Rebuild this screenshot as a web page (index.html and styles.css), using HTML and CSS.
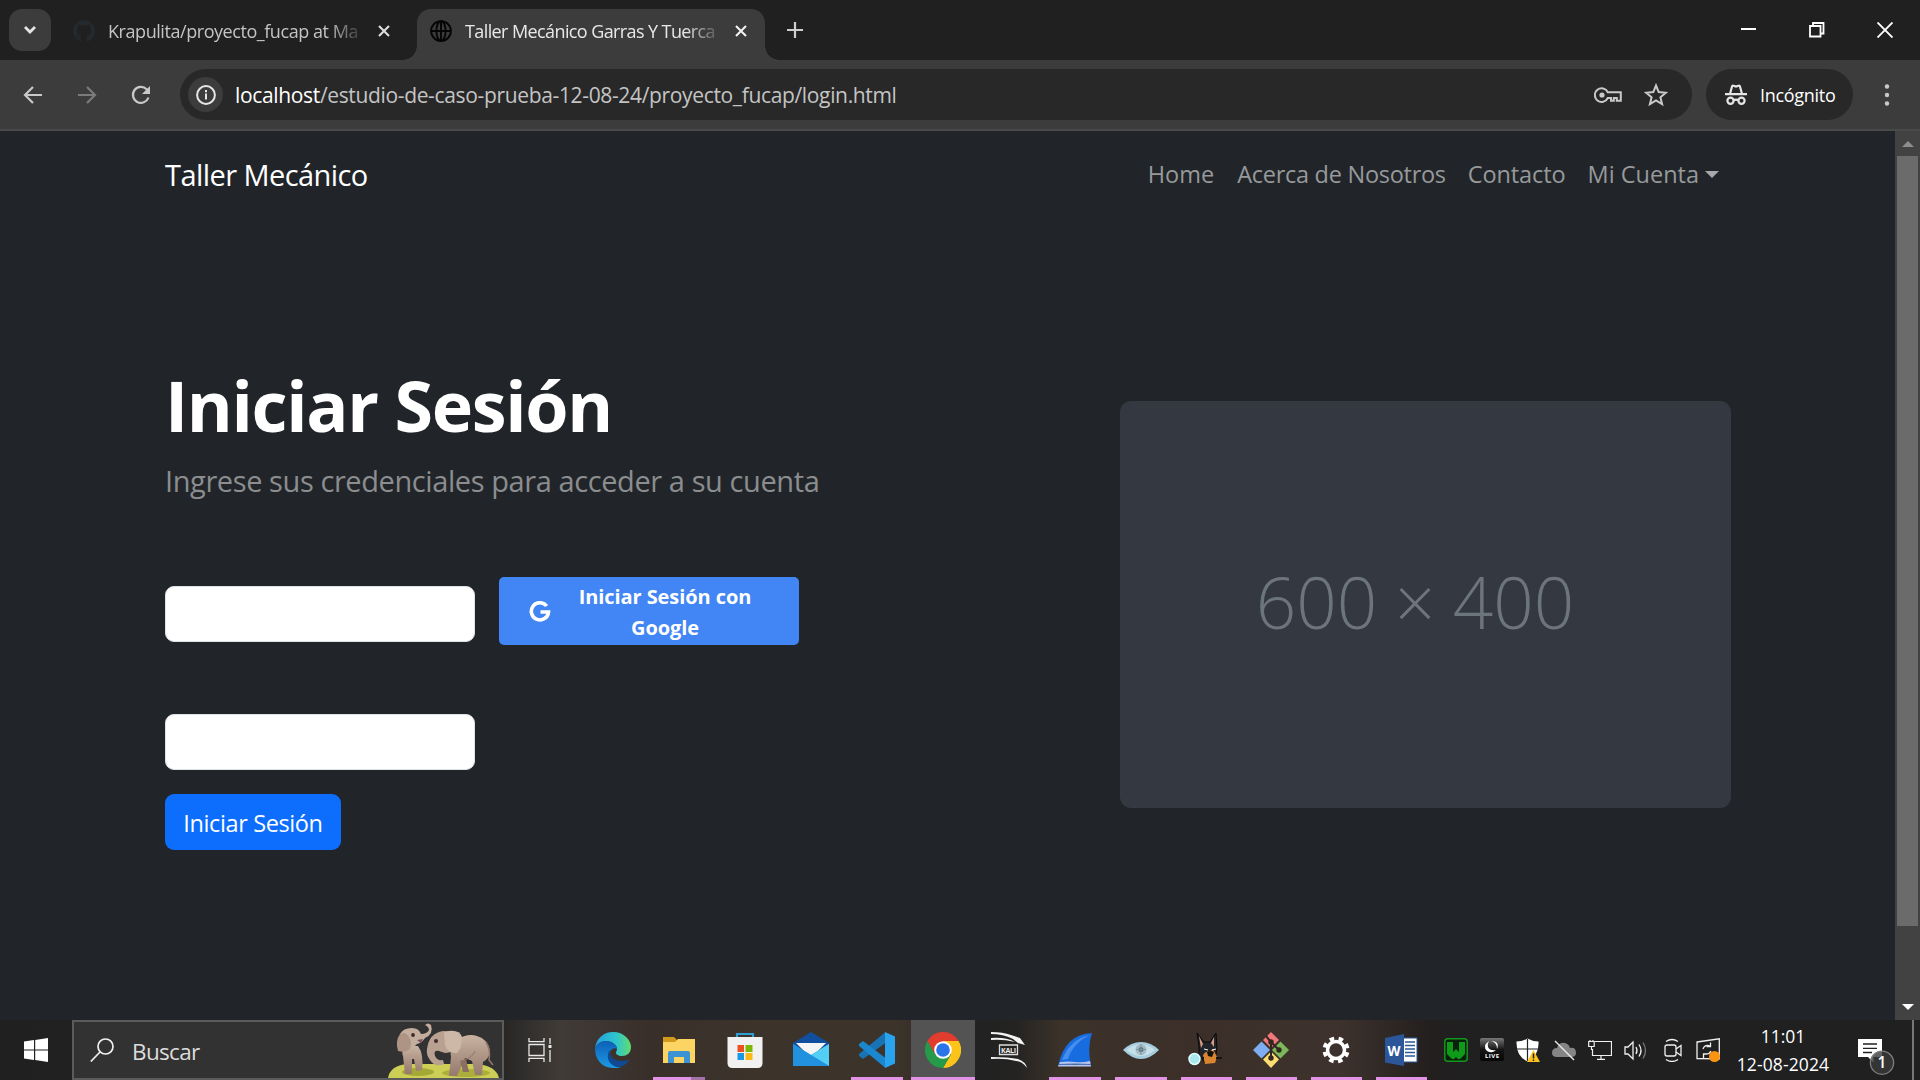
FILE: index.html
```html
<!DOCTYPE html>
<html lang="es">
<head>
<meta charset="utf-8">
<title>Taller Mecánico Garras Y Tuercas</title>
<link rel="stylesheet" href="styles.css">
</head>
<body>
<header class="tabs">
  <button class="tab-search"><svg width="14" height="10" viewBox="0 0 14 10"><path d="M2 2l5 5 5-5" fill="none" stroke="#e6e6e6" stroke-width="2.8"/></svg></button>
  <div class="tab">
    <svg class="fav" viewBox="0 0 16 16"><path fill="#24292e" d="M8 0C3.58 0 0 3.58 0 8c0 3.54 2.29 6.53 5.47 7.59.4.07.55-.17.55-.38 0-.19-.01-.82-.01-1.49-2.01.37-2.53-.49-2.69-.94-.09-.23-.48-.94-.82-1.13-.28-.15-.68-.52-.01-.53.63-.01 1.08.58 1.23.82.72 1.21 1.87.87 2.33.66.07-.52.28-.87.51-1.07-1.78-.2-3.64-.89-3.64-3.95 0-.87.31-1.59.82-2.15-.08-.2-.36-1.02.08-2.12 0 0 .67-.21 2.2.82a7.6 7.6 0 014 0c1.53-1.04 2.2-.82 2.2-.82.44 1.1.16 1.92.08 2.12.51.56.82 1.27.82 2.15 0 3.07-1.87 3.75-3.65 3.95.29.25.54.73.54 1.48 0 1.07-.01 1.93-.01 2.2 0 .21.15.46.55.38A8.01 8.01 0 0016 8c0-4.42-3.58-8-8-8z"/></svg>
    <span class="tab-title tab-one">Krapulita/proyecto_fucap at Ma</span>
    <svg class="tab-x" viewBox="0 0 12 12"><path d="M1 1l10 10M11 1L1 11" stroke="#dedede" stroke-width="2.1"/></svg>
  </div>
  <div class="tab tab-active">
    <svg class="fav" viewBox="0 0 22 22" fill="none" stroke="#050505" stroke-width="1.9"><circle cx="11" cy="11" r="9.9"/><ellipse cx="11" cy="11" rx="4.6" ry="9.9"/><path d="M1 11h20M11 1v20"/></svg>
    <span class="tab-title tab-two">Taller Mecánico Garras Y Tuerca</span>
    <svg class="tab-x" viewBox="0 0 12 12"><path d="M1 1l10 10M11 1L1 11" stroke="#f2f2f2" stroke-width="2.1"/></svg>
  </div>
  <svg class="plus" viewBox="0 0 16 16"><path d="M8 0v16M0 8h16" stroke="#cfcfcf" stroke-width="2.2"/></svg>
  <div class="win">
    <svg viewBox="0 0 16 16"><path d="M0 7h15" stroke="#fff" stroke-width="2"/></svg>
    <svg viewBox="0 0 16 16" fill="none" stroke="#fff" stroke-width="1.8"><path d="M1 4h10.500v10.500H1zM4 4V1h10.500v10.500h-3"/></svg>
    <svg viewBox="0 0 16 16"><path d="M.5.5l15 15M15.500.5l-15 15" stroke="#fff" stroke-width="1.9"/></svg>
  </div>
</header>
<div class="toolbar">
  <svg class="tb back" viewBox="0 0 20 20"><path d="M19 10H3M10 2l-8 8 8 8" fill="none" stroke="#c9c9c9" stroke-width="2.2"/></svg>
  <svg class="tb fwd" viewBox="0 0 20 20"><path d="M1 10h16M10 2l8 8-8 8" fill="none" stroke="#7b7b7b" stroke-width="2.2"/></svg>
  <svg class="tb reload" viewBox="0 0 20 20"><path d="M17.500 12.500a8 8 0 1 1-1.800-8.200L18 6.500" fill="none" stroke="#c9c9c9" stroke-width="2.2"/><path d="M19 1v8h-8z" fill="#c9c9c9"/></svg>
  <div class="omni">
    <span class="info"><svg width="20" height="20" viewBox="0 0 20 20"><circle cx="10" cy="10" r="8.900" fill="none" stroke="#e6e6e6" stroke-width="2"/><path d="M10 8.500v6M10 5v2.200" stroke="#e6e6e6" stroke-width="2"/></svg></span>
    <span class="url"><b>localhost</b>/estudio-de-caso-prueba-12-08-24/proyecto_fucap/login.html</span>
    <svg class="key" viewBox="0 0 28 16" fill="none" stroke="#c9c9c9" stroke-width="2"><path d="M13.800 5.200H26.800v8.500h-4V11h-3v2.700h-2.800V11h-3.200A6.800 6.800 0 1 1 13.800 5.200z"/><circle cx="8" cy="8" r="2.600" fill="#c9c9c9" stroke="none"/></svg>
    <svg class="star" viewBox="0 0 24 24"><path d="M12 2.500l2.700 6.600 7.100.6-5.400 4.600 1.700 6.900-6.100-3.700-6.100 3.700 1.700-6.900-5.400-4.600 7.100-.6z" fill="none" stroke="#c9c9c9" stroke-width="2"/></svg>
  </div>
  <div class="incog">
    <svg width="22" height="22" viewBox="0 0 22 22" fill="none" stroke="#e6e6e6" stroke-width="2.200"><path d="M0 10.200h22M5 10l2-7.500q.4-1.100 1.500-.8l2.500.8 2.500-.8q1.100-.3 1.500.8L17 10"/><circle cx="5.500" cy="16.700" r="3.100"/><circle cx="16.500" cy="16.700" r="3.100"/><path d="M8.500 16.200q2.500-1.200 5 0"/></svg>
    <span>Incógnito</span>
  </div>
  <svg class="dots" viewBox="0 0 6 22" fill="#c9c9c9"><circle cx="3" cy="2.500" r="2.200"/><circle cx="3" cy="11" r="2.200"/><circle cx="3" cy="19.500" r="2.200"/></svg>
</div>
<div class="view">
  <main class="page">
    <nav class="nav">
      <a class="brand">Taller Mecánico</a>
      <div class="links"><a>Home</a><a class="about">Acerca de Nosotros</a><a class="contact">Contacto</a><a>Mi Cuenta</a><i class="caret"></i></div>
    </nav>
    <div class="cols">
      <section class="login">
        <h1>Iniciar Sesión</h1>
        <p class="sub">Ingrese sus credenciales para acceder a su cuenta</p>
        <div class="row">
          <input class="field" type="text">
          <button class="google">
            <svg width="22" height="22" viewBox="0 0 22 22"><path d="M17.700 5A8.600 8.600 0 1 0 19.500 11H11.500" fill="none" stroke="#fff" stroke-width="3.600"/></svg>
            <span class="gtext">Iniciar Sesión con<br>Google</span>
          </button>
        </div>
        <input class="field field-2" type="password">
        <button class="submit">Iniciar Sesión</button>
      </section>
      <figure class="ph">600 × 400</figure>
    </div>
  </main>
  <aside class="scroll"><i class="up"></i><i class="thumb"></i><i class="down"></i></aside>
</div>
<footer class="task">
  <div class="start"><svg width="24" height="24" viewBox="0 0 24 24" fill="#fff"><path d="M0 3.500l10-1.400v9.300H0zM11.200 1.900L24 0v11.400H11.200zM0 12.600h10v9.300L0 20.500zM11.200 12.600H24V24l-12.800-1.900z"/></svg></div>
  <div class="search">
    <svg class="mag" viewBox="0 0 24 24" fill="none" stroke="#f0f0f0" stroke-width="1.700"><circle cx="15.500" cy="8.500" r="7.500"/><path d="M10 14L.8 23.500"/></svg>
    <span class="search-label">Buscar</span>
    <svg class="eleph" viewBox="0 0 112 56">
      <defs><linearGradient id="el" x1="0" y1="0" x2="0" y2="1"><stop offset="0" stop-color="#c9b3a1"/><stop offset="1" stop-color="#94796c"/></linearGradient></defs>
      <path d="M0 56q2-12 18-14h72q18 2 21 14z" fill="#cdce55"/><ellipse cx="30" cy="50" rx="16" ry="4" fill="#a4a936"/><ellipse cx="78" cy="51" rx="24" ry="4" fill="#aaae3a"/>
      <path d="M17 24h13q6 8 4 24l-6 1-2-12-2 0 0 15h-7l-2-18q-2-5 2-10z" fill="url(#el)"/>
      <path d="M12 12q3-6 12-6 7 0 9 6 6 0 8-4 0-3-4-5 3-3 6 0 3 9-6 13-3 5-8 6-4 5-11 4-6-5-6-14z" fill="#c3ad9c"/>
      <path d="M12 12q-5 7-2 17 8 2 12-2 3-11-5-16z" fill="#ad9484"/>
      <path d="M29 18l6-1-2 4z" fill="#78505f"/><circle cx="25" cy="13" r="1.900" fill="#41282b"/>
      <path d="M70 17q10-6 19-3 11 3 13 15 0 7-7 11l-1 13h-7l-3-14-7-3-2 5-6 13h-8l2-19q-2-9 6-18z" fill="url(#el)"/>
      <path d="M72 39l6-2 3 13h-6z" fill="#8b6f63"/>
      <path d="M39 27q2-16 16-18 13 0 15 10-2 12-13 12l-6-2q-6-1-4 5 2 5 8 4l1 4q-9 4-14-4-4-5-3-11z" fill="#b9a191"/>
      <path d="M56 10q15-4 18 5 0 11-5 16-9 1-12-8z" fill="#cdb8a8"/><circle cx="48" cy="19" r="2" fill="#452b2c"/>
      <path d="M98 20q5 8 3 18l4 5" fill="none" stroke="#92776b" stroke-width="1.500"/><path d="M76 38q8-2 11-9" fill="none" stroke="#8f7367"/>
    </svg>
  </div>
  <div class="tview"><svg width="24" height="24" viewBox="0 0 24 24" fill="none" stroke="#e8e8e8" stroke-width="1.300"><path d="M1 0v3.700h15V0M1 24v-3.700h15V24M1 6.500h15v11H1zM22 0v6M22 12v12"/><path d="M20.500 7h3v3h-3z" fill="#e8e8e8" stroke="none"/></svg></div>
  <div class="apps">
    <div class="app"><svg viewBox="0 0 36 36"><defs><linearGradient id="e1"><stop stop-color="#229fe0"/><stop offset=".6" stop-color="#2fc6cd"/><stop offset="1" stop-color="#62dc6d"/></linearGradient><linearGradient id="e2" x2="0" y2="1"><stop stop-color="#0d5fb8"/><stop offset="1" stop-color="#1b9be4"/></linearGradient></defs><path d="M0 17C1 6 9 0 18 0c11 0 18 8 18 15 0 6-4 9-9 9-4 0-6-2-6-3 0-2 1-2 1-4 0-4-5-8-11-8C5 9 1 13 0 17z" fill="url(#e1)"/><path d="M0 17c1-4 5-8 11-8 6 0 11 4 11 8-2-2-8 0-8 7 0 6 5 12 12 11-3 1-5 1-8 1C7 36 0 27 0 17z" fill="url(#e2)"/><path d="M14.500 18c-5 9 2 18 11 17 5-2 8-5 9-8-3 2-6 2-8 2-8 0-12-4-12-11z" fill="#114a94"/></svg></div>
    <div class="app run dual"><svg viewBox="0 0 36 36"><path d="M2 5h11l3 3v4H2z" fill="#d39b1c"/><path d="M2 10h12l3-3h17v24H2z" fill="#fbd463"/><path d="M7 31V21q0-2 2-2h18q2 0 2 2v10h-6v-6H13v6z" fill="#3b93d4"/></svg></div>
    <div class="app"><svg viewBox="0 0 36 36"><path d="M10 6V2h16v4" fill="none" stroke="#2d9fd5" stroke-width="2.200"/><path d="M.5 5h35v26q0 5-5 5h-25q-5 0-5-5z" fill="#f1f1f1"/><path d="M10.500 13H17v7h-6.500z" fill="#ef5022"/><path d="M18.500 13H25.500v7h-7z" fill="#7db900"/><path d="M10.500 21H17v7h-6.500z" fill="#1a98e4"/><path d="M18.500 21H25.500v7h-7z" fill="#fcb813"/></svg></div>
    <div class="app"><svg viewBox="0 0 36 36"><path d="M0 11L18 0l18 11v5H0z" fill="#104f9d"/><path d="M3 11h30L18 26z" fill="#f5f5f5"/><path d="M0 12l18 11 18-11v22H0z" fill="#2eabe9"/><path d="M18 23l18-11v22z" fill="#53cef5"/><path d="M0 12l36 22H0z" fill="#2292df"/></svg></div>
    <div class="app run"><svg viewBox="0 0 36 36"><path d="M26.500 0v11L4 27l-4-3v-2z" fill="#1972b4"/><path d="M0 12l4-3 22.500 17v10L0 14z" fill="#1b87cf"/><path d="M26 0l10 4.500v27L26 36z" fill="#2aa3ef"/></svg></div>
    <div class="app run cur"><svg viewBox="0 0 36 36"><path d="M2.400 9A18 18 0 0 1 33.600 9H18L10.200 22.500z" fill="#e23c2e"/><path d="M33.600 9A18 18 0 0 1 18 36L25.800 22.500 18 9z" fill="#fcc419"/><path d="M18 36A18 18 0 0 1 2.400 9L10.200 22.500h15.600z" fill="#249a4a"/><circle cx="18" cy="18" r="8.800" fill="#fff"/><circle cx="18" cy="18" r="6.800" fill="#2c75e8"/></svg></div>
    <div class="app"><svg viewBox="0 0 36 36"><path d="M0 0q12 0 20 3l9 3 5 7-7-2-5-4Q12 2 0 2zM0 6q15-1 24 4-12-3-24-2zM0 25q18 0 27 2 8 3 9 9-5-7-11-7Q14 26 0 27z" fill="#f3f3f3"/><path d="M8.500 13h18v9.500h-18z" fill="none" stroke="#ddd" stroke-width="1.300"/><text x="10" y="20.600" font-size="7" font-weight="700" font-family="Open Sans,sans-serif" fill="#eee" textLength="15">KALI</text></svg></div>
    <div class="app run"><svg viewBox="0 0 36 36"><path d="M1 34Q8 2 35 1q-5 15-1 33z" fill="#176ce0"/><path d="M5 28Q13 7 33 3 16 11 11 27z" fill="#468ded"/><path d="M1 34.500l2-4.500q8-1 15 0t15-1l1 5.500z" fill="#b6c7ed"/><path d="M2 32.500q16-1 32 0" stroke="#4569b7"/></svg></div>
    <div class="app run"><svg viewBox="0 0 36 36"><path d="M0 18q8-8 18-8t18 8q-9 9-18 9T0 18z" fill="#a6cddd"/><path d="M3 18q8-6 15-6t14 6q-7 6-14 6T3 18z" fill="#c5e0e8"/><circle cx="18" cy="17.500" r="5.500" fill="#a3bcc6"/><circle cx="18" cy="17.500" r="2.500" fill="#5c727b"/><path d="M18 12v11M13 17.500h10" stroke="#7a939e"/></svg></div>
    <div class="app run n"><svg viewBox="0 0 36 36"><path d="M11 14L9 1l7 9h6l6-9 1 15-2 12-10 3-6-8z" fill="#23242a" stroke="#080808"/><path d="M11 4l4 8-2 4zM26 5l-3 6 3 4z" fill="#d99d86"/><path d="M15 23q3-5 6-3l4-3 4 8-2 6-10 1z" fill="#d9852f"/><path d="M19 20q4-2 7 0l-2 5-4-1z" fill="#111"/><path d="M16 17l4 1M24 18l4-1" stroke="#fff"/><path d="M11 26h5M28 26h6" stroke="#161616" stroke-width="2"/><circle cx="6.500" cy="27" r="5.500" fill="#a9e6ee" stroke="#dff" stroke-width="1.500"/></svg></div>
    <div class="app run n"><svg viewBox="0 0 36 36"><path d="M18 0l8 8-8 8-8-8z" fill="#f0777a"/><path d="M8.500 9.500L17 18l-8.500 8.500L0 18z" fill="#7eaef1"/><path d="M27.500 9.500L36 18l-8.500 8.500L19 18z" fill="#7cb85a"/><path d="M18 19.500l8 8-8 8.500-8-8.500z" fill="#fbdd72"/><path d="M13 4l5 6v17M18 10l8 8" fill="none" stroke="#33251f" stroke-width="2"/><circle cx="18" cy="10" r="2.700" fill="#33251f"/><circle cx="26" cy="18" r="2.700" fill="#33251f"/><circle cx="18" cy="26" r="2.700" fill="#33251f"/></svg></div>
    <div class="app run n"><svg viewBox="0 0 36 36" fill="none" stroke="#fff"><circle cx="18" cy="18" r="8.500" stroke-width="3.500"/><circle cx="18" cy="18" r="11.500" stroke-width="4" stroke-dasharray="4.500 4.530" stroke-dashoffset="-2.300"/></svg></div>
    <div class="app run n"><svg viewBox="0 0 36 36"><path d="M19 6h15v24H19z" fill="#fff" stroke="#2b5797"/><path d="M22 10h10M22 13.500h10M22 17h10M22 20.500h10M22 24h10" stroke="#2b5797" stroke-width="1.500"/><path d="M2 6l19-4v32L2 30.500z" fill="#2b579a"/><text x="4.500" y="23.500" font-size="15" font-weight="700" font-family="Open Sans,sans-serif" fill="#fff" textLength="13" lengthAdjust="spacingAndGlyphs">W</text></svg></div>
  </div>
  <div class="tray">
    <svg viewBox="0 0 24 24"><rect x=".8" y=".8" width="22.400" height="22.400" rx="3" fill="#07210a" stroke="#15951d" stroke-width="1.500"/><path d="M3 4h6v10l3-3 3 3V4h6v12l-5 5h-2l-2-2-2 2H8l-5-5z" fill="#0f9b19"/></svg>
    <svg viewBox="0 0 24 24"><defs><linearGradient id="lv" x2="0" y2="1"><stop stop-color="#777"/><stop offset=".5" stop-color="#161616"/><stop offset="1" stop-color="#050505"/></linearGradient></defs><rect width="24" height="23" rx="2" fill="url(#lv)"/><path d="M9 3q-7 5-2 10 5 3 9-1-6 1-8-3-1-3 1-6zM11 3q6 1 6 8 3-8-6-8z" fill="#fff"/><text x="5" y="20" font-size="6" font-weight="700" font-family="Open Sans,sans-serif" fill="#fff" textLength="14">LIVE</text></svg>
    <svg viewBox="0 0 24 24"><path d="M11.500.5q5 3 11 3 1 14-11 20Q0 18 .5 3.500q6 0 11-3z" fill="#fff"/><path d="M11.500 1v22M1 11h22" stroke="#222" stroke-width="1.200"/><path d="M17.500 12L24 24H11z" fill="#fcc21b"/><path d="M17.500 15.500v5M17.500 21.500v1.500" stroke="#222" stroke-width="1.500"/></svg>
    <svg viewBox="0 0 24 24"><path d="M5 19q-5 0-5-4 0-5 5-5 2-6 8-5 4 1 5 5 6-1 6 5 0 4-5 4z" fill="#858585"/><path d="M3 3l19 19" stroke="#e8e8e8" stroke-width="1.500"/></svg>
    <svg viewBox="0 0 24 24" fill="none" stroke="#f0f0f0" stroke-width="1.200"><path d="M7 3.500h16.500v14H4.500V11M13 17.500V21M9 21.300h8M.7 3.500h5.500v5H.7zM3.500 8.500V12M2 2v1.500M5 2v1.500"/></svg>
    <svg viewBox="0 0 24 24" fill="none" stroke="#f0f0f0" stroke-width="1.300"><path d="M1 9h3l5-5v17l-5-5H1zM12 9q2 3.500 0 7M15 6.500q4 6 0 12"/><path d="M19 4.500q5 8 0 16" stroke="#777"/></svg>
    <svg viewBox="0 0 24 24" fill="none" stroke="#f0f0f0" stroke-width="1.300"><rect x="5" y="7" width="11" height="11" rx="2"/><path d="M16 11l5-3.500v10L16 14M6 3.500q6-4 12 0M6 21.500q6 4 12 0"/></svg>
    <svg viewBox="0 0 24 24" fill="none" stroke="#f0f0f0" stroke-width="1.300"><path d="M1 4L23.300.8v20L1 20.500z"/><path d="M7 11q2-5 7-3M14.500 4.500v4h-4M15 13q-2 4-7 3M7.500 20v-4h4"/><circle cx="18.500" cy="18.500" r="5.500" fill="#f99413" stroke="none"/></svg>
  </div>
  <div class="clock"><span>11:01</span><span class="date">12-08-2024</span></div>
  <svg class="notif" viewBox="0 0 37 37"><path d="M0 0h24v18H15.500v5.500L10 18H0z" fill="#fff"/><path d="M5 5h14M5 9.300h14M5 13.500h9" stroke="#222" stroke-width="1.300"/><circle cx="24" cy="23.700" r="11.600" fill="#3a3a3acc" stroke="#808080" stroke-width="1.300"/><text x="24" y="29" text-anchor="middle" font-size="15.500" font-weight="600" font-family="Open Sans,sans-serif" fill="#fff">1</text></svg>
  <i class="desk"></i>
</footer>
</body>
</html>
```
FILE: styles.css
```css
* { box-sizing: border-box; }
body {
  margin: 0; width: 1920px; height: 1080px; overflow: hidden;
  display: flex; flex-direction: column;
  background: #212529; color: #fff;
  font-family: "Open Sans", "Noto Sans", sans-serif;
}
svg { display: block; flex: none; }
button { border: 0; padding: 0; margin: 0; font: inherit; color: inherit; }
i { display: block; }

/* tab strip */
.tabs { height: 60px; flex: none; background: #202020; display: flex; padding-top: 9px; }
.tab-search { width: 42px; height: 42px; margin-left: 9px; border-radius: 13px; background: #3c3c3c; display: grid; place-items: center; }
.tab { display: flex; align-items: center; width: 347px; height: 51px; padding: 0 0 8px 13px; margin-left: 9px; color: #c4c4c4; }
.tab-active { position: relative; width: 348px; margin-left: 10px; background: #3c3c3c; border-radius: 14px 14px 0 0; color: #e8e8e8; }
.tab-active::before, .tab-active::after { content: ""; position: absolute; bottom: 0; width: 14px; height: 14px; }
.tab-active::before { left: -14px; background: radial-gradient(circle at 0 0, transparent 13.500px, #3c3c3c 14px); }
.tab-active::after { right: -14px; background: radial-gradient(circle at 100% 0, transparent 13.500px, #3c3c3c 14px); }
.fav { width: 22px; height: 22px; }
.tab-title { width: 252px; margin-left: 13px; padding-top: 1px; white-space: nowrap; font-size: 18px; mask-image: linear-gradient(90deg, #000 220px, transparent 258px); }
.tab-one { letter-spacing: -.44px; }
.tab-two { letter-spacing: -.6px; }
.tab-x { width: 12px; height: 12px; margin-left: 18px; }
.plus { width: 16px; height: 16px; margin: 13px 0 0 22px; }
.win { display: flex; gap: 52px; margin: 13px 27px 0 auto; }
.win svg { width: 16px; height: 16px; }

/* toolbar */
.toolbar { height: 71px; flex: none; display: flex; align-items: center; background: #3c3c3c; border-bottom: 2px solid #494949; }
.tb { width: 20px; height: 20px; }
.back { margin-left: 23px; }
.fwd { margin-left: 34px; }
.reload { margin-left: 34px; }
.omni { display: flex; align-items: center; width: 1512px; height: 51px; margin-left: 29px; border-radius: 26px; background: #282828; padding: 0 24px 0 8px; }
.info { width: 35px; height: 35px; border-radius: 50%; background: #3c3c3c; display: grid; place-items: center; }
.url { margin-left: 12px; font-size: 21px; letter-spacing: -.345px; color: #c4c4c4; white-space: nowrap; }
.url b { font-weight: 400; color: #fff; }
.key { width: 28px; height: 16px; margin-left: auto; }
.star { width: 24px; height: 24px; margin-left: 22px; }
.incog { display: flex; align-items: center; width: 147px; height: 51px; margin-left: 14px; padding-left: 19px; gap: 13px; border-radius: 26px; background: #282828; font-size: 18px; letter-spacing: -.3px; }
.dots { width: 6px; height: 22px; margin-left: 31px; }

/* page */
.view { flex: 1; display: flex; }
.page { flex: 1; padding: 0 164px 0 165px; }
.nav { display: flex; align-items: center; justify-content: space-between; height: 86px; }
.brand { font-size: 29px; letter-spacing: -.57px; }
.links { display: flex; align-items: center; gap: 22px; padding-right: 12px; font-size: 23.500px; color: #97999b; }
.about { margin-left: 1px; letter-spacing: -.27px; }
.contact { letter-spacing: -.1px; }
.caret { border: 7px solid transparent; border-top-color: #a6a8a9; border-bottom: 0; margin-left: -16px; }
.cols { display: flex; justify-content: space-between; }
.login { width: 660px; padding-top: 146px; }
h1 { margin: 0; font-size: 70px; line-height: 84px; font-weight: 700; letter-spacing: -1.33px; white-space: nowrap; }
.sub { margin: 12px 0 0; font-size: 29px; line-height: 44px; letter-spacing: -.41px; color: #8b8d8f; white-space: nowrap; }
.row { display: flex; gap: 24px; margin-top: 74px; align-items: flex-end; }
.field { display: block; width: 310px; height: 56px; border: 1px solid #dee2e6; border-radius: 9px; background: #fff; padding: 0 18px; }
.field-2 { margin-top: 72px; }
.google { display: flex; align-items: center; width: 300px; height: 68px; margin-bottom: -3px; padding: 2px 20px 0 30px; border-radius: 5px; background: #4285f4; }
.gtext { flex: 1; text-align: center; font-size: 20px; font-weight: 700; line-height: 31px; letter-spacing: -.08px; }
.submit { margin-top: 24px; width: 176px; height: 56px; padding-top: 2px; border-radius: 9px; background: #0d6efd; font-size: 23.500px; letter-spacing: -.38px; }
.ph { width: 611px; height: 407px; margin: 184px 0 0; padding: 0 21px 6px 0; border-radius: 11px; background: #343840; color: #6c757d; display: grid; place-items: center; font-size: 71px; font-weight: 300; word-spacing: -1px; }

/* scrollbar */
.scroll { width: 25px; background: #424242; display: flex; flex-direction: column; align-items: center; padding: 10px 0; }
.up { border: 6px solid transparent; border-bottom-color: #8d8d8d; border-top: 0; }
.thumb { width: 21px; height: 770px; margin-top: 9px; background: #6b6b6b; }
.down { margin-top: auto; border: 6px solid transparent; border-top-color: #fff; border-bottom: 0; }

/* taskbar */
.task { height: 60px; flex: none; display: flex; align-items: center; background: linear-gradient(90deg, #202020 0, #282726 505px, #403b37 560px, #392f2a 650px, #3c342b 760px, #3c332a 900px, #222 980px, #242322 1015px, #3b322a 1060px, #3c2f29 1200px, #3d322d 1340px, #231f1e 1430px, #202020 1460px); }
.start { width: 72px; padding-left: 24px; }
.search { display: flex; align-items: center; width: 432px; height: 60px; border: 2px solid #5b5b5b; background: #323232; padding: 0 2px 0 16px; font-size: 22.500px; color: #dcdcdc; }
.search-label { padding-top: 2px; letter-spacing: -.65px; }
.mag { width: 24px; height: 24px; margin-right: 18px; }
.eleph { width: 112px; height: 56px; margin-left: auto; }
.tview { width: 76px; padding-left: 24px; }
.apps { display: flex; height: 60px; }
.app { width: 66px; display: flex; flex-direction: column; align-items: center; padding-top: 12px; }
.n { width: 65px; }
.app svg { width: 36px; height: 36px; }
.n svg { margin-right: 2px; }
.run::after { content: ""; width: 52px; height: 3px; margin-top: 9px; background: #e293e6; }
.n::after { width: 51px; }
.dual::after { background: linear-gradient(90deg, #e293e6 38px, #a273a5 38px); }
.cur { background: #535353; width: 64px; margin: 0 1px; }
.cur::after { width: 64px; }
.tray { display: flex; gap: 12px; margin-left: 10px; }
.tray svg { width: 24px; height: 24px; }
.clock { display: flex; flex-direction: column; align-items: center; width: 100px; margin-left: 13px; font-size: 17.500px; line-height: 28px; }
.date { letter-spacing: .12px; }
.notif { width: 37px; height: 37px; margin: 14px 0 0 25px; }
.desk { width: 2px; height: 60px; background: #777; margin-left: auto; margin-right: 6px; }
```
